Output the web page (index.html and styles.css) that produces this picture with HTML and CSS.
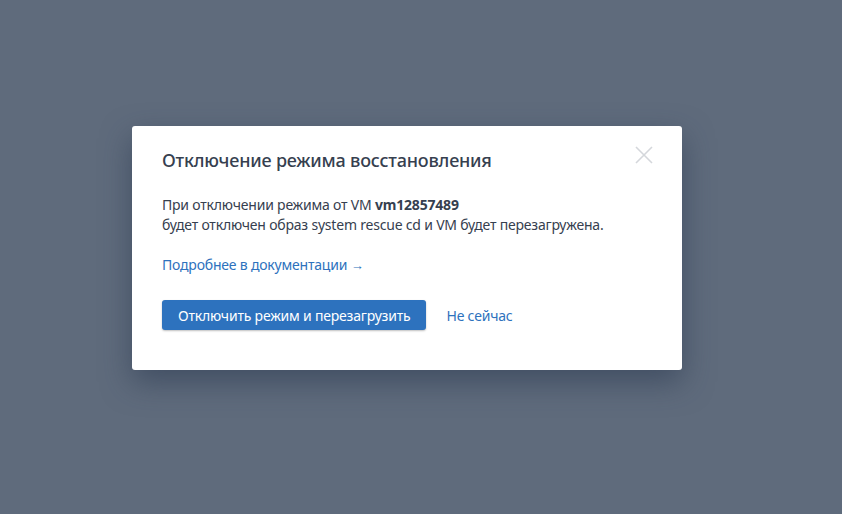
FILE: index.html
```html
<!DOCTYPE html>
<html lang="ru">
<head>
    <meta charset="UTF-8">
    <title>Отключение режима восстановления</title>
    <link rel="stylesheet" href="styles.css">
</head>
<body>

<div class="overlay">
    <div class="modal">
        <button class="close" aria-label="Закрыть">
            <svg width="18" height="18" viewBox="0 0 18 18">
                <path d="M1 1L17 17M17 1L1 17" stroke="#d4d7db" stroke-width="1.6" fill="none"/>
            </svg>
        </button>
        <h2 class="title">Отключение режима восстановления</h2>
        <p class="text">
            При отключении режима от VM <strong>vm12857489</strong><br>
            будет отключен образ system rescue cd и VM будет перезагружена.
        </p>
        <a class="doc-link" href="#">Подробнее в документации <span class="arrow">→</span></a>
        <div class="actions">
            <button class="btn-primary">Отключить режим и перезагрузить</button>
            <a class="btn-link" href="#">Не сейчас</a>
        </div>
    </div>
</div>

</body>
</html>
```

FILE: styles.css
```css
html, body {
    margin: 0;
    padding: 0;
    height: 100%;
}
body {
    font-family: "Noto Sans", "Open Sans", sans-serif;
    letter-spacing: -0.2px;
    background-color: #5f6b7c;
    color: #36404f;
}
.overlay {
    height: 100%;
    display: flex;
    justify-content: center;
    padding-top: 126px;
    padding-right: 28px;
    box-sizing: border-box;
}
.modal {
    position: relative;
    width: 550px;
    height: 244px;
    box-sizing: border-box;
    padding: 22px 30px 0 30px;
    background-color: #fff;
    border-radius: 3px;
    box-shadow: 0 12px 30px rgba(40, 55, 78, 0.55);
}
.close {
    position: absolute;
    top: 20px;
    right: 29px;
    padding: 0;
    border: none;
    background: none;
    cursor: pointer;
}
.close svg {
    display: block;
}
.title {
    margin: 0;
    font-size: 18px;
    font-weight: 500;
    line-height: 24px;
    color: #36404f;
}
.text {
    margin: 23px 0 0 0;
    font-size: 14px;
    line-height: 20px;
}
.text strong {
    font-weight: 700;
}
.doc-link {
    display: inline-block;
    margin-top: 20px;
    font-size: 14px;
    line-height: 20px;
    color: #2e72bd;
    text-decoration: none;
}
.arrow {
    font-size: 13px;
}
.actions {
    display: flex;
    align-items: center;
    gap: 20px;
    margin-top: 25px;
}
.btn-primary {
    height: 30px;
    padding: 0 16px;
    font-family: inherit;
    font-size: 14px;
    letter-spacing: -0.2px;
    color: #fff;
    background-color: #2d72be;
    border: none;
    border-radius: 3px;
    box-shadow: 0 1px 2px rgba(0, 0, 0, 0.25);
    cursor: pointer;
}
.btn-link {
    font-size: 14px;
    color: #2e72bd;
    text-decoration: none;
}
```
